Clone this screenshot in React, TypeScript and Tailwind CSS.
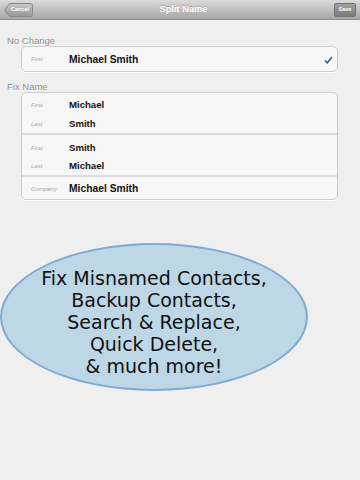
import React from "react";

const Row = ({ label, value, h }: { label: string; value: string; h: string }) => (
  <div className={`flex items-center ${h}`}>
    <div className="w-[47px] pl-[9px] text-[6px] italic text-[#a8a8a8]">{label}</div>
    <div className="text-[9.6px] font-bold text-[#111]">{value}</div>
  </div>
);

export default function App() {
  return (
    <div
      className="w-[360px] h-[480px] overflow-hidden bg-[#efefef] relative"
      style={{ fontFamily: '"Liberation Sans", Arial, sans-serif' }}
    >
      {/* Nav bar */}
      <div className="h-[20px] flex items-center justify-between px-[4px] bg-gradient-to-b from-[#dadada] via-[#c0c0c0] to-[#a6a6a6] border-b border-[#8e8e8e]">
        <div className="relative w-[29px] h-[14px] flex items-center justify-center">
          <svg className="absolute inset-0" width="29" height="14" viewBox="0 0 29 14">
            <defs>
              <linearGradient id="cg" x1="0" y1="0" x2="0" y2="1">
                <stop offset="0" stopColor="#c8c8c8" />
                <stop offset="1" stopColor="#969696" />
              </linearGradient>
            </defs>
            <path d="M0.5 7 L5.5 0.5 H26.5 Q28.5 0.5 28.5 2.5 V11.5 Q28.5 13.5 26.5 13.5 H5.5 Z" fill="url(#cg)" stroke="#878787" strokeWidth="1" />
          </svg>
          <span className="relative text-[5.5px] font-bold text-white pl-[3px]">Cancel</span>
        </div>
        <div className="pt-[1px] text-[9.3px] font-bold text-white [text-shadow:0_-1px_0_rgba(0,0,0,0.2)]">Split Name</div>
        <div className="w-[22px] h-[14px] rounded-[2px] border border-[#737373] bg-gradient-to-b from-[#a3a3a3] to-[#7a7a7a] flex items-center justify-center">
          <span className="text-[5.5px] font-bold text-white">Save</span>
        </div>
      </div>

      {/* No Change */}
      <div className="pl-[7px] mt-[15px] h-[11px] leading-[11px] text-[9.5px] text-[#8c8c8c] [text-shadow:0_1px_0_#fff]">No Change</div>
      <div className="ml-[21px] mr-[22px] h-[26px] rounded-[5px] border border-[#cbcbcb] bg-[#f7f7f7] shadow-[0_1px_0_#fff] flex items-center justify-between pr-[4px] pt-[1px]">
        <div className="flex items-center">
          <div className="w-[47px] pl-[9px] text-[6px] italic text-[#a8a8a8]">First</div>
          <div className="text-[10.3px] font-bold text-[#111]">Michael Smith</div>
        </div>
        <svg width="9" height="8" viewBox="0 0 9 8">
          <path d="M1 4.5 L3.3 6.8 L8 1" fill="none" stroke="#3d5a8c" strokeWidth="1.6" />
        </svg>
      </div>

      {/* Fix Name */}
      <div className="pl-[7px] mt-[9px] h-[11px] leading-[11px] text-[9.5px] text-[#8c8c8c] [text-shadow:0_1px_0_#fff]">Fix Name</div>
      <div className="ml-[21px] mr-[22px] rounded-[5px] border border-[#cbcbcb] bg-[#f7f7f7] shadow-[0_1px_0_#fff] flex flex-col">
        <div className="flex flex-col h-[40px] pt-[3px]">
          <Row label="First" value="Michael" h="h-[19px]" />
          <Row label="Last" value="Smith" h="h-[18px]" />
        </div>
        <div className="h-[2px] bg-[#dcdcdc]" />
        <div className="flex flex-col h-[40px] pt-[4px]">
          <Row label="First" value="Smith" h="h-[18px]" />
          <Row label="Last" value="Michael" h="h-[18px]" />
        </div>
        <div className="h-[2px] bg-[#dcdcdc]" />
        <div className="flex items-center h-[22px] pt-[2px]">
          <div className="w-[47px] pl-[9px] text-[6px] italic text-[#a8a8a8]">Company</div>
          <div className="text-[10.3px] font-bold text-[#111]">Michael Smith</div>
        </div>
      </div>

      {/* Ellipse */}
      <div className="mt-[43px] w-[308px] h-[148px] rounded-[50%] border-2 border-[#7eabd2] bg-[#bdd7e7] flex flex-col items-center justify-center pt-[9px]">
        <div
          className="text-center text-[19px] leading-[22px] text-[#111]"
          style={{ fontFamily: '"DejaVu Sans", Verdana, sans-serif' }}
        >
          <div>Fix Misnamed Contacts,</div>
          <div>Backup Contacts,</div>
          <div>Search &amp; Replace,</div>
          <div>Quick Delete,</div>
          <div>&amp; much more!</div>
        </div>
      </div>
    </div>
  );
}
